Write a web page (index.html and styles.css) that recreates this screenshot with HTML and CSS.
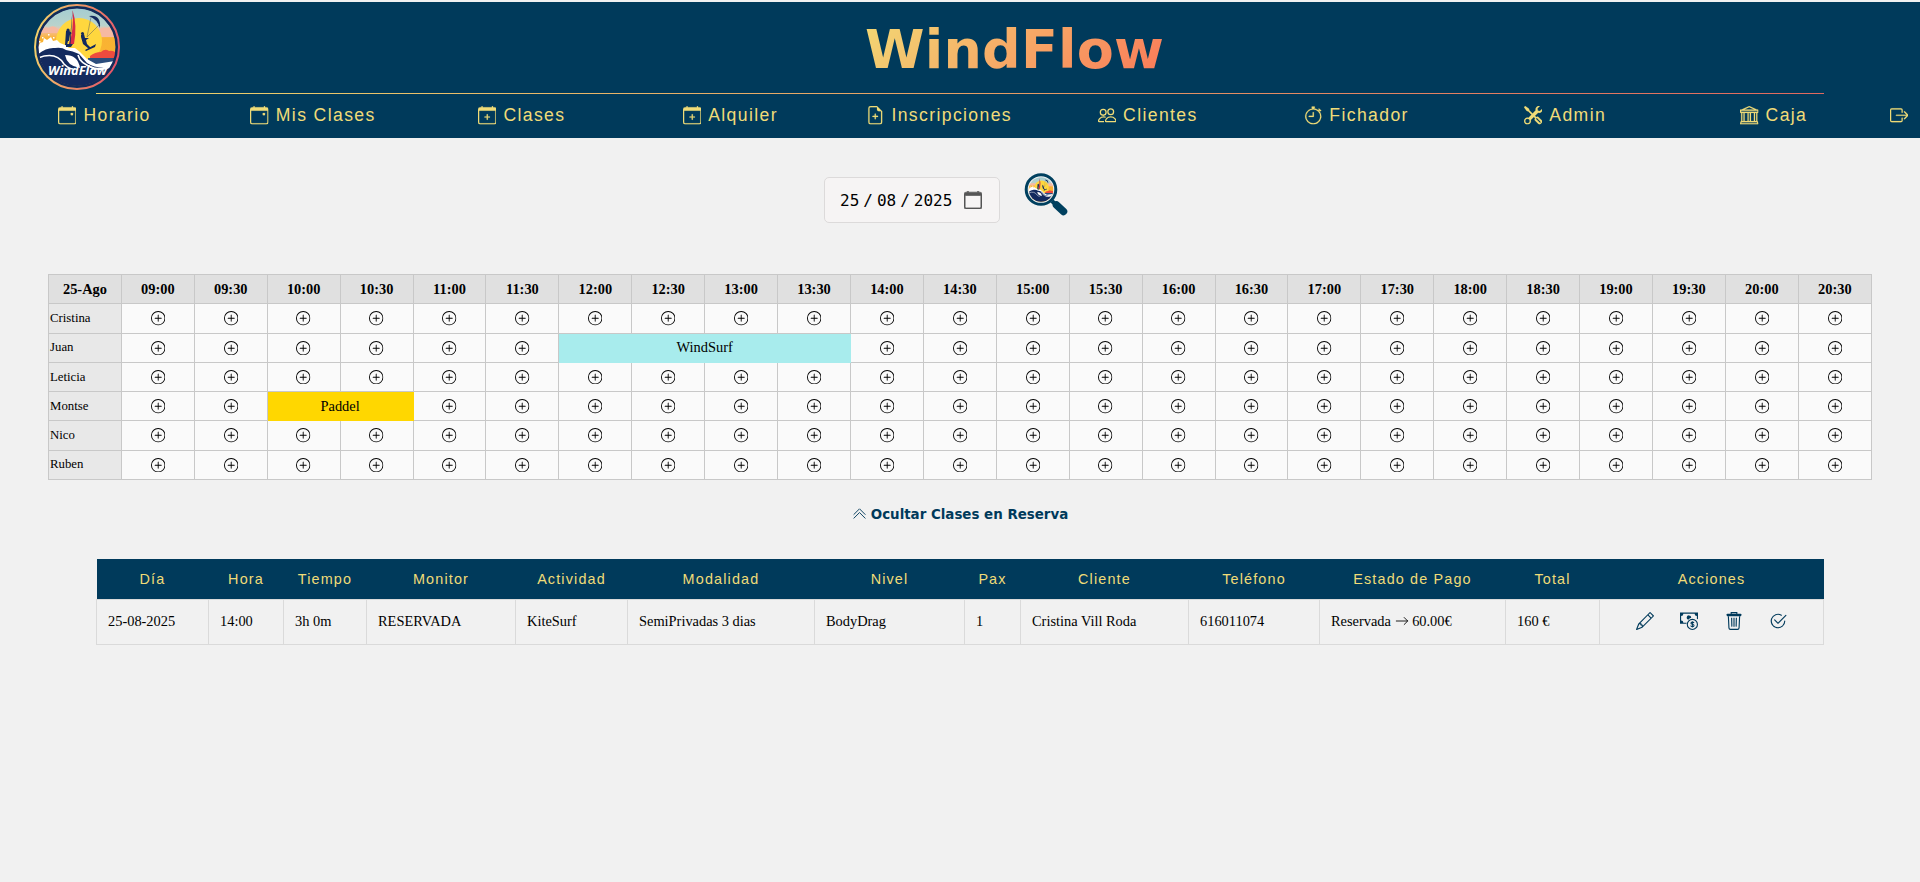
FILE: index.html
```html
<!DOCTYPE html>
<html lang="es">
<head>
<meta charset="utf-8">
<title>WindFlow</title>
<link rel="stylesheet" href="styles.css">
</head>
<body>
<svg class="sprite" aria-hidden="true">
  <defs>
    <symbol id="i-frame" viewBox="0 0 16 16"><path d="M3.5 0a.5.5 0 0 1 .5.5V1h8V.5a.5.5 0 0 1 1 0V1h1a2 2 0 0 1 2 2v11a2 2 0 0 1-2 2H2a2 2 0 0 1-2-2V3a2 2 0 0 1 2-2h1V.5a.5.5 0 0 1 .5-.5M1 4v10a1 1 0 0 0 1 1h12a1 1 0 0 0 1-1V4z"/></symbol>
    <symbol id="i-event" viewBox="0 0 16 16"><use href="#i-frame"/><path d="M11 6.5a.5.5 0 0 1 .5-.5h1a.5.5 0 0 1 .5.5v1a.5.5 0 0 1-.5.5h-1a.5.5 0 0 1-.5-.5z"/></symbol>
    <symbol id="i-calplus" viewBox="0 0 16 16"><use href="#i-frame"/><path d="M8 7a.5.5 0 0 1 .5.5V9H10a.5.5 0 0 1 0 1H8.500v1.500a.5.5 0 0 1-1 0V10H6a.5.5 0 0 1 0-1h1.500V7.500A.5.5 0 0 1 8 7"/></symbol>
    <symbol id="i-file" viewBox="0 0 16 16"><path d="M8 6.5a.5.5 0 0 1 .5.5v1.500H10a.5.5 0 0 1 0 1H8.500V11a.5.5 0 0 1-1 0V9.500H6a.5.5 0 0 1 0-1h1.500V7a.5.5 0 0 1 .5-.5"/><path d="M14 4.500V14a2 2 0 0 1-2 2H4a2 2 0 0 1-2-2V2a2 2 0 0 1 2-2h5.500zm-3 0A1.500 1.500 0 0 1 9.500 3V1H4a1 1 0 0 0-1 1v12a1 1 0 0 0 1 1h8a1 1 0 0 0 1-1V4.500z"/></symbol>
    <symbol id="i-people" viewBox="0 0 16 16"><g fill="none" stroke="currentColor" stroke-width="1.100"><circle cx="11" cy="5" r="2.500"/><circle cx="4.500" cy="5.500" r="2.500"/><path d="M7 13.500h8q.5 0 .5-.5c0-1-1-3.500-4.500-3.500S6.500 12 6.500 13q0 .5.500.500zM5.200 13.500H1Q.5 13.500.5 13C.5 12 1.500 9.500 5 9.500q1 0 1.700.25"/></g></symbol>
    <symbol id="i-watch" viewBox="0 0 16 16"><path d="M8.500 5.600a.5.5 0 1 0-1 0v2.900h-3a.5.5 0 0 0 0 1H8a.5.5 0 0 0 .5-.5z"/><path d="M6.500 1A.5.5 0 0 1 7 .5h2a.5.5 0 0 1 0 1v.57c1.360.196 2.594.780 3.584 1.640l.012-.013.354-.354-.354-.353a.5.5 0 0 1 .707-.708l1.414 1.415a.5.5 0 1 1-.707.707l-.353-.354-.354.354-.013.012A7 7 0 1 1 7 2.071V1.500a.5.5 0 0 1-.5-.5M8 3a6 6 0 1 0 .001 12A6 6 0 0 0 8 3"/></symbol>
    <symbol id="i-tools" viewBox="0 0 16 16"><path fill-rule="evenodd" d="M1 0 0 1l2.200 3.081a1 1 0 0 0 .815.419h.07a1 1 0 0 1 .708.293l2.675 2.675-2.617 2.654A3.003 3.003 0 0 0 0 13a3 3 0 1 0 5.878-.851l2.654-2.617.968.968-.305.914a1 1 0 0 0 .242 1.023l3.270 3.270a.997.997 0 0 0 1.414 0l1.586-1.586a.997.997 0 0 0 0-1.414l-3.270-3.270a1 1 0 0 0-1.023-.242L10.500 9.500l-.96-.96 2.680-2.643A3.005 3.005 0 0 0 16 3q0-.405-.102-.777l-2.140 2.141L12 4l-.364-1.757L13.777.102a3 3 0 0 0-3.675 3.680L7.462 6.460 4.793 3.793a1 1 0 0 1-.293-.707v-.071a1 1 0 0 0-.419-.814zm9.646 10.646a.5.5 0 0 1 .708 0l2.914 2.915a.5.5 0 0 1-.707.707l-2.915-2.914a.5.5 0 0 1 0-.708M3 11l.471.242.529.026.287.445.445.287.026.529L5 13l-.242.471-.026.529-.445.287-.287.445-.529.026L3 15l-.471-.242L2 14.732l-.287-.445L1.268 14l-.026-.529L1 13l.242-.471.026-.529.445-.287.287-.445.529-.026z"/></symbol>
    <symbol id="i-bank" viewBox="0 0 16 16"><path d="m8 0 6.610 3h.89a.5.5 0 0 1 .5.5v2a.5.5 0 0 1-.5.5H15v7a.5.5 0 0 1 .485.380l.5 2a.498.498 0 0 1-.485.620H.5a.498.498 0 0 1-.485-.620l.5-2A.5.5 0 0 1 1 13V6H.5a.5.5 0 0 1-.5-.5v-2A.5.5 0 0 1 .5 3h.89zM3.777 3h8.447L8 1zM2 6v7h1V6zm2 0v7h2.500V6zm3.500 0v7h1V6zm2 0v7H12V6zM13 6v7h1V6zm2-1V4H1v1zm-.39 9H1.390l-.25 1h13.720z"/></symbol>
    <symbol id="i-exit" viewBox="0 0 16 16"><path d="M10 12.500a.5.5 0 0 1-.5.5h-8a.5.5 0 0 1-.5-.5v-9a.5.5 0 0 1 .5-.5h8a.5.5 0 0 1 .5.5v2a.5.5 0 0 0 1 0v-2A1.500 1.500 0 0 0 9.500 2h-8A1.500 1.500 0 0 0 0 3.500v9A1.500 1.500 0 0 0 1.500 14h8a1.500 1.500 0 0 0 1.500-1.500v-2a.5.5 0 0 0-1 0z"/><path d="M15.854 8.354a.5.5 0 0 0 0-.708l-3-3a.5.5 0 0 0-.708.708L14.293 7.500H5.500a.5.5 0 0 0 0 1h8.793l-2.147 2.146a.5.5 0 0 0 .708.708z"/></symbol>
    <symbol id="i-plus" viewBox="0 0 16 16"><path d="M8 15A7 7 0 1 1 8 1a7 7 0 0 1 0 14m0 1A8 8 0 1 0 8 0a8 8 0 0 0 0 16"/><path d="M8 4a.5.5 0 0 1 .5.5v3h3a.5.5 0 0 1 0 1h-3v3a.5.5 0 0 1-1 0v-3h-3a.5.5 0 0 1 0-1h3v-3A.5.5 0 0 1 8 4"/></symbol>
    <symbol id="i-up" viewBox="0 0 16 16"><path fill="none" stroke="currentColor" stroke-linecap="round" stroke-linejoin="round" d="m2 9 6-6 6 6M2 13l6-6 6 6"/></symbol>
    <symbol id="i-arrow" viewBox="0 0 16 16"><path fill="none" stroke="currentColor" stroke-linecap="round" stroke-linejoin="round" d="M1.500 8h13M10.500 4l4 4-4 4"/></symbol>
    <symbol id="i-pencil" viewBox="0 0 16 16"><path d="M12.146.146a.5.5 0 0 1 .708 0l3 3a.5.5 0 0 1 0 .708l-10 10a.5.5 0 0 1-.168.110l-5 2a.5.5 0 0 1-.65-.65l2-5a.5.5 0 0 1 .110-.168zM11.207 2.500 13.500 4.793 14.793 3.500 12.500 1.207zm1.586 3L10.500 3.207 4 9.707V10h.5a.5.5 0 0 1 .5.5v.5h.5a.5.5 0 0 1 .5.5v.5h.293zm-9.761 5.175-.106.106-1.528 3.821 3.821-1.528.106-.106A.5.5 0 0 1 5 12.500V12h-.5a.5.5 0 0 1-.5-.5V11h-.5a.5.5 0 0 1-.468-.325"/></symbol>
    <symbol id="i-cash" viewBox="0 0 16 16"><path fill-rule="evenodd" d="M0 .5h16v6.200a5 5 0 0 0-1-.7V3.500a2 2 0 0 1-2-2H3a2 2 0 0 1-2 2V7.500a2 2 0 0 1 2 2h3a6 6 0 0 0-.2 1H0z"/><path d="M8 3a2 2 0 0 1 2 2 6 6 0 0 0-2.700 1.900A2 2 0 0 1 8 3"/><circle cx="11" cy="11" r="4.500" fill="none" stroke="currentColor"/><path fill="none" stroke="currentColor" stroke-width=".9" d="M12.400 9.900c-.1-.6-.7-.9-1.400-.9s-1.300.3-1.300.9c0 1.300 2.800.7 2.800 2.100 0 .6-.7 1-1.500 1s-1.400-.4-1.500-1M11 8.300v5.400"/></symbol>
    <symbol id="i-trash" viewBox="0 0 16 16"><path fill="none" stroke="currentColor" stroke-width="1" d="M5.500 1.700V.6h5v1.100M3 3.800l.5 10.300q.1 1.300 1.300 1.300h6.400q1.200 0 1.300-1.300L13 3.800M5.900 5.200l.2 7.800M8 5.200V13M10.100 5.200 9.900 13"/><rect x="1.500" y="1.500" width="13" height="2.200" rx=".6"/></symbol>
    <symbol id="i-check" viewBox="0 0 16 16"><path d="M2.500 8a5.500 5.500 0 0 1 8.250-4.764.5.5 0 0 0 .5-.866A6.500 6.500 0 1 0 14.500 8a.5.5 0 0 0-1 0 5.500 5.500 0 1 1-11 0"/><path d="M15.354 3.354a.5.5 0 0 0-.708-.708L8 9.293 5.354 6.646a.5.5 0 1 0-.708.708l3 3a.5.5 0 0 0 .708 0z"/></symbol>
    <linearGradient id="ring" x1="0" x2="1" y1=".4" y2=".6"><stop offset="0" stop-color="#f2d06b"/><stop offset=".5" stop-color="#ee8f66"/><stop offset="1" stop-color="#e2506a"/></linearGradient>
    <linearGradient id="sky" x1="0" x2="0" y1="0" y2="1"><stop offset="0" stop-color="#9fcbd3"/><stop offset=".25" stop-color="#b9d3cc"/><stop offset=".3" stop-color="#f6c0a4"/><stop offset=".4" stop-color="#f9b233"/><stop offset="1" stop-color="#fbb92d"/></linearGradient>
    <clipPath id="disc"><circle cx="43" cy="43" r="39"/></clipPath>
    <symbol id="scene" viewBox="0 0 86 86">
      <g clip-path="url(#disc)">
        <rect width="86" height="86" fill="url(#sky)"/>
        <path fill="#f6b9a2" d="M3 30q6-8 12-6 4-4 9 1l6 4H3zM62 28q6-6 11-4 6-3 10 4v5H62z"/>
        <circle cx="45" cy="37" r="23" fill="#ffd73e"/>
        <path fill="#ee4b3e" d="M56 52q5-4 11-4 4-4 8-1 5-1 8 3v7H56z"/>
        <path fill="#2b4d7c" d="M54 54h30v10H54z"/>
        <path fill="#fff" d="M2 48l4-9 3-1 1-4 3 2 4-3 2 4 4-1 3 3 5 2 4 3 6 0 5 4 7 7 9 5 19-3v12H2z"/>
        <path fill="#fff" d="M8 33h1.500v1.500H8zM14 30h1.500v1.500H14zM19 33h1.500v1.500H19zM5 37h1.500v1.500H5z"/>
        <path fill="#132a5e" d="M2 52q10-9 19-8 7-1 11 2 7 1 13 4l8 9q12 8 30 2v25H2z"/>
        <path fill="none" stroke="#fff" stroke-width="1.600" d="M4 54q18-7 26 6 5 5 9 5M44 51q2 9 16 13"/>
        <path fill="#fff" d="M31 51q13 0 15 13-13-2-15-13zM54 62q14 5 26-4-3 9-15 8-7 0-11-4z"/>
        <path fill="#d92c46" d="M38.500 6q5 15 1.500 34h-5q5-14 3.500-34z"/>
        <path fill="#132a5e" d="M38.500 6l-2 34h-1zM32 27l3-2 1 3 2 1-2 1.500-1 6.500h-1l-1 4h-2zM32 40h7l-2 3h-5zM47 31l3-1 1 4 4 0-3 2 1 4 4 4-2 1-6-5-2-7zM51 46l11-6-1 3-9 4z"/>
        <circle cx="34" cy="26" r="1.500" fill="#132a5e"/><circle cx="48.500" cy="29.500" r="1.500" fill="#132a5e"/>
        <path fill="#132a5e" d="M55 12q12-2 11 12-3-9-11-12z"/>
        <path fill="none" stroke="#31405f" stroke-width=".4" d="M57 13l-4 20 12-12"/>
      </g>
    </symbol>
  </defs>
</svg>

<header class="header">
  <div class="brand">
    <svg class="logo" viewBox="0 0 86 86">
      <use href="#scene" width="86" height="86"/>
      <circle cx="43" cy="43" r="39.500" fill="none" stroke="#15295a" stroke-width="2"/>
      <circle cx="43" cy="43" r="42" fill="none" stroke="url(#ring)" stroke-width="2"/>
      <text class="logo-text" x="43.500" y="70.500" text-anchor="middle" textLength="59" lengthAdjust="spacingAndGlyphs">WindFlow</text>
    </svg>
    <h1 class="title">WindFlow</h1>
  </div>
  <div class="rule"></div>
  <nav class="nav">
    <a class="nav-item"><svg class="nav-icon"><use href="#i-event"/></svg>Horario</a>
    <a class="nav-item"><svg class="nav-icon"><use href="#i-event"/></svg>Mis Clases</a>
    <a class="nav-item"><svg class="nav-icon"><use href="#i-calplus"/></svg>Clases</a>
    <a class="nav-item"><svg class="nav-icon"><use href="#i-calplus"/></svg>Alquiler</a>
    <a class="nav-item"><svg class="nav-icon"><use href="#i-file"/></svg>Inscripciones</a>
    <a class="nav-item"><svg class="nav-icon"><use href="#i-people"/></svg>Clientes</a>
    <a class="nav-item"><svg class="nav-icon"><use href="#i-watch"/></svg>Fichador</a>
    <a class="nav-item"><svg class="nav-icon"><use href="#i-tools"/></svg>Admin</a>
    <a class="nav-item"><svg class="nav-icon"><use href="#i-bank"/></svg>Caja</a>
    <a class="nav-item"><svg class="nav-icon"><use href="#i-exit"/></svg></a>
  </nav>
</header>

<main>
  <div class="search">
    <div class="date"><span>25</span><span>/</span><span>08</span><span>/</span><span>2025</span><svg class="date-icon"><use href="#i-frame"/></svg></div>
    <svg class="lens" viewBox="0 0 46 46">
      <path d="M28 29l4 4" stroke="#00405f" stroke-width="4"/>
      <path d="M32.500 33l7 6.500" stroke="#00405f" stroke-width="7.500" stroke-linecap="round"/>
      <circle cx="17" cy="17.500" r="14.800" fill="#f1f1f1" stroke="#00405f" stroke-width="3"/>
      <use href="#scene" x="3.500" y="4" width="27" height="27"/>
    </svg>
  </div>

  <table class="schedule"><tbody id="schedule"></tbody></table>

  <div class="toggle"><svg class="toggle-icon"><use href="#i-up"/></svg>Ocultar Clases en Reserva</div>

  <table class="bookings">
    <colgroup><col class="w112"><col class="w75"><col class="w83"><col class="w149"><col class="w112"><col class="w187"><col class="w150"><col class="w56"><col class="w168"><col class="w131"><col class="w186"><col class="w94"><col class="w224"></colgroup>
    <thead><tr><th>Día</th><th>Hora</th><th>Tiempo</th><th>Monitor</th><th>Actividad</th><th>Modalidad</th><th>Nivel</th><th>Pax</th><th>Cliente</th><th>Teléfono</th><th>Estado de Pago</th><th>Total</th><th>Acciones</th></tr></thead>
    <tbody><tr><td>25-08-2025</td><td>14:00</td><td>3h 0m</td><td>RESERVADA</td><td>KiteSurf</td><td>SemiPrivadas 3 dias</td><td>BodyDrag</td><td>1</td><td>Cristina Vill Roda</td><td>616011074</td><td>Reservada <svg class="arrow"><use href="#i-arrow"/></svg> 60.00€</td><td>160 €</td>
      <td><div class="actions"><svg><use href="#i-pencil"/></svg><svg><use href="#i-cash"/></svg><svg><use href="#i-trash"/></svg><svg><use href="#i-check"/></svg></div></td></tr></tbody>
  </table>
</main>
<script src="schedule.js"></script>
</body>
</html>
```
FILE: styles.css
```css
body {
  margin: 0;
  padding-top: 2px;
  background: #f1f1f1;
  color: #000;
  font-family: "Liberation Serif", serif;
}

svg { fill: currentColor; }
.sprite { position: absolute; width: 0; height: 0; }

.header {
  height: 136px;
  background: #003a5b;
  color: #f0dc78;
}

.brand {
  display: flex;
  align-items: flex-start;
  box-sizing: border-box;
  height: 91px;
  padding: 2px 0 0 34px;
}

.logo { width: 86px; height: 86px; flex: none; }
.logo-text { font: italic bold 11.500px "Open Sans", sans-serif; fill: #fff; }

.title {
  margin: 14px 0 0 745px;
  font: bold 54px/64px "DejaVu Sans", sans-serif;
  letter-spacing: 0.2px;
  color: transparent;
  background: linear-gradient(135deg, #f2d974, #fa7858);
  background-clip: text;
  -webkit-background-clip: text;
}

.rule {
  height: 1px;
  margin: 0 96px;
  background: linear-gradient(90deg, #ecd46c, #e0695f);
}

.nav {
  display: grid;
  grid-template-columns: repeat(9, 1fr) 42px;
  height: 43px;
}

.nav-item {
  display: flex;
  align-items: center;
  justify-content: center;
  gap: 7px;
  font: 17.600px "Liberation Sans", sans-serif;
  letter-spacing: 1.380px;
  white-space: nowrap;
}

.nav-icon { width: 18.500px; height: 18.500px; flex: none; stroke: currentColor; stroke-width: 0.15px; }

.search {
  display: flex;
  padding: 34px 0 0 824px;
}

.date {
  display: flex;
  align-items: center;
  box-sizing: border-box;
  width: 176px;
  height: 46px;
  margin-top: 5px;
  padding-left: 15px;
  gap: 4px;
  border: 1px solid #dcdada;
  border-radius: 5px;
  background: #f6f4f4;
  font: 16px "DejaVu Sans Mono", monospace;
}

.date-icon { width: 18px; height: 18px; margin-left: 8px; color: #555; stroke: #555; stroke-width: 0.6px; overflow: visible; }
.lens { width: 46px; height: 46px; margin-left: 24px; }

.schedule {
  width: 1824px;
  margin: 51px auto 0;
  border-collapse: collapse;
  table-layout: fixed;
  font-size: 14.400px;
  text-align: center;
}

.schedule td, .schedule th {
  height: 28.300px;
  padding: 0;
  border: 1px solid #c8c8c8;
  background: #fafafa;
}

.schedule .head th { background: #e0e0e0; }
.schedule .name { background: #e8e8e8; font-size: 12.800px; font-weight: normal; text-align: left; padding-left: 1px; }
.schedule .windsurf { background: #a8eced; border-color: #a8eced; }
.schedule .paddel { background: #ffd700; border-color: #ffd700; }
.plus { display: block; width: 14.400px; height: 14.400px; margin: 0 auto; }

.toggle {
  display: flex;
  align-items: center;
  justify-content: center;
  gap: 4px;
  height: 20px;
  margin-top: 23.500px;
  color: #003a5b;
  font: bold 14.900px "DejaVu Sans Condensed", "DejaVu Sans", sans-serif;
}

.toggle-icon { width: 15px; height: 15px; }

.bookings {
  width: 1727px;
  margin: 35px auto 0;
  border-collapse: collapse;
  table-layout: fixed;
  font-size: 14.400px;
}

.bookings th {
  height: 40px;
  padding: 0;
  background: #003a5b;
  color: #f0dc78;
  font: 14.400px "Liberation Sans", sans-serif;
  letter-spacing: 1.150px;
}

.bookings td {
  height: 44px;
  padding: 0 0 0 11px;
  border: 1px solid #dadada;
  white-space: nowrap;
}

.arrow { width: 14px; height: 14px; vertical-align: -2px; }

.actions {
  display: flex;
  justify-content: center;
  gap: 26.500px;
  padding: 0 11px 2px 0;
  color: #003a5b;
}

.actions svg { width: 18px; height: 18px; }

.w56 { width: 56px; }
.w75 { width: 75px; }
.w83 { width: 83px; }
.w94 { width: 94px; }
.w112 { width: 112px; }
.w131 { width: 131px; }
.w149 { width: 149px; }
.w150 { width: 150px; }
.w168 { width: 168px; }
.w186 { width: 186px; }
.w187 { width: 187px; }
.w224 { width: 224px; }
```
FILE: schedule.js
```js
const slots = [];
for (let h = 9; h < 21; h++) {
  const hour = String(h).padStart(2, "0");
  slots.push(hour + ":00", hour + ":30");
}

const bookings = {
  Juan: { start: "12:00", span: 4, label: "WindSurf", type: "windsurf" },
  Montse: { start: "10:00", span: 2, label: "Paddel", type: "paddel" }
};

let html = '<tr class="head"><th>25-Ago</th>' + slots.map(s => `<th>${s}</th>`).join("") + "</tr>";

for (const name of ["Cristina", "Juan", "Leticia", "Montse", "Nico", "Ruben"]) {
  html += `<tr><th class="name">${name}</th>`;
  for (let i = 0; i < slots.length; i++) {
    const b = bookings[name];
    if (b && b.start === slots[i]) {
      html += `<td class="${b.type}" colspan="${b.span}">${b.label}</td>`;
      i += b.span - 1;
    } else {
      html += '<td><svg class="plus"><use href="#i-plus"/></svg></td>';
    }
  }
  html += "</tr>";
}

document.getElementById("schedule").innerHTML = html;
```
